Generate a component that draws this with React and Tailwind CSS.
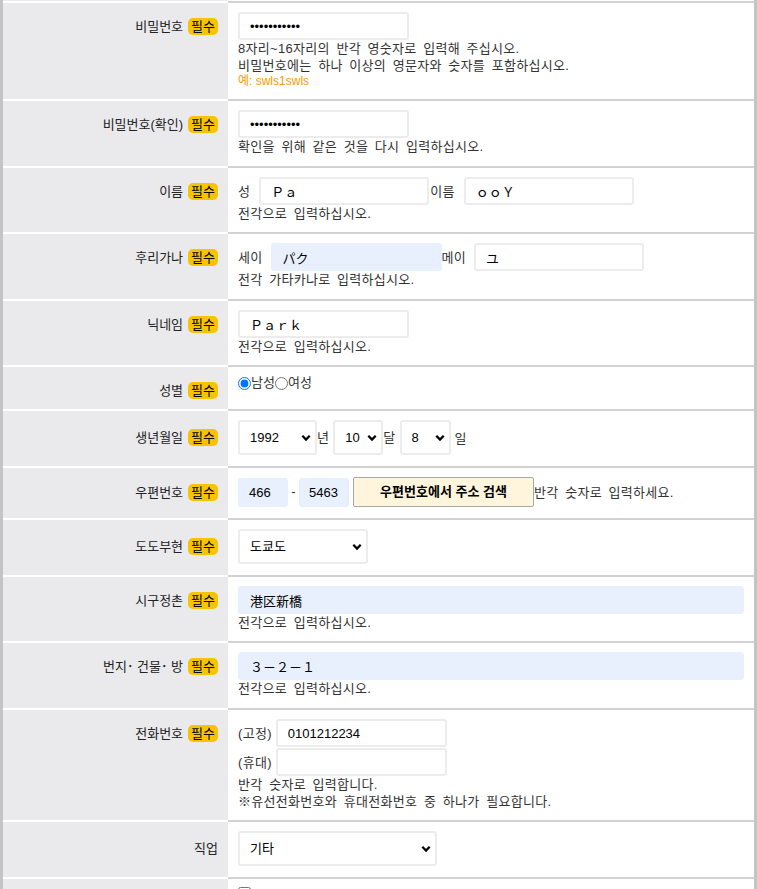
import React from "react";

const FONT = "font-['Liberation_Sans','Noto_Sans_CJK_KR',sans-serif]";

function Badge() {
  return (
    <span className="inline-flex items-center justify-center h-[17px] px-[3px] rounded-[5px] bg-[#f8c300] text-[13px] leading-none text-black">
      필수
    </span>
  );
}

function Row({ label, req = true, lh = "h-[28px]", pb = "pb-[11px]", children }) {
  return (
    <div className="flex">
      <div className="w-[225px] shrink-0 bg-[#eaeaed] border-t-2 border-white pt-[9px] pr-[10px]">
        <div className={`flex items-center justify-end gap-[5px] ${lh}`}>
          <span className="text-[13px] leading-[17px] text-[#222] whitespace-nowrap">{label}</span>
          {req && <Badge />}
        </div>
      </div>
      <div className={`flex-1 min-w-0 bg-white border-t-2 border-[#d2d2d2] pt-[9px] px-[10px] ${pb}`}>
        {children}
      </div>
    </div>
  );
}

function TextInput({ w = "w-[171px]", h = "h-[28px]", pad = "px-[10px]", value = "", type = "text", auto = false }) {
  const base = `${w} ${h} ${pad} shrink-0 border-2 rounded-[3px] text-[13px] text-black outline-none`;
  const color = auto ? "bg-[#e8f0fe] border-[#e8f0fe]" : "bg-white border-[#ececec]";
  return <input type={type} defaultValue={value} className={`${base} ${color}`} />;
}

function Select({ w, value, options }) {
  return (
    <div className={`relative shrink-0 h-[35px] ${w}`}>
      <select
        defaultValue={value}
        className="appearance-none w-full h-full border-2 border-[#ececec] rounded-[3px] bg-white pl-[10px] text-[13px] text-black outline-none"
      >
        {options.map((o) => (
          <option key={o}>{o}</option>
        ))}
      </select>
      <svg
        className="absolute right-[6px] top-1/2 -translate-y-1/2 pointer-events-none"
        width="10"
        height="7"
        viewBox="0 0 10 7"
      >
        <path d="M1.3 1.3 5 5 8.7 1.3" fill="none" stroke="black" strokeWidth="2.3" />
      </svg>
    </div>
  );
}

function Help({ children }) {
  return (
    <div className="text-[13px] leading-[17px] text-[#333] whitespace-nowrap tracking-[0.3px] [word-spacing:2.7px]">
      {children}
    </div>
  );
}

function Side({ children }) {
  return (
    <span className="text-[13px] leading-[17px] text-[#333] whitespace-nowrap tracking-[0.3px] [word-spacing:2.7px]">
      {children}
    </span>
  );
}

export default function App() {
  return (
    <div className={`min-h-screen bg-white border-x-[3px] border-[#c4c4c4] ${FONT}`}>
      <div className="flex h-px">
        <div className="w-[225px] bg-[#eaeaed]" />
        <div className="flex-1" />
      </div>

      <Row label="비밀번호">
        <TextInput type="password" value="abcdefghijk" />
        <Help>8자리~16자리의 반각 영숫자로 입력해 주십시오.</Help>
        <Help>비밀번호에는 하나 이상의 영문자와 숫자를 포함하십시오.</Help>
        <div className="text-[12px] leading-[14px] text-[#ff9900]">예: swls1swls</div>
      </Row>

      <Row label="비밀번호(확인)">
        <TextInput type="password" value="abcdefghijk" />
        <Help>확인을 위해 같은 것을 다시 입력하십시오.</Help>
      </Row>

      <Row label="이름" pb="pb-[10px]">
        <div className="flex items-center">
          <Side>성</Side>
          <div className="ml-[9px]">
            <TextInput w="w-[170px]" value="Ｐａ" />
          </div>
          <span className="ml-[1px]">
            <Side>이름</Side>
          </span>
          <div className="ml-[9px]">
            <TextInput w="w-[170px]" value="ｏｏＹ" />
          </div>
        </div>
        <Help>전각으로 입력하십시오.</Help>
      </Row>

      <Row label="후리가나">
        <div className="flex items-center">
          <Side>세이</Side>
          <div className="ml-[8px]">
            <TextInput w="w-[171px]" value="パク" auto />
          </div>
          <Side>메이</Side>
          <div className="ml-[8px]">
            <TextInput w="w-[170px]" value="ユ" />
          </div>
        </div>
        <Help>전각 가타카나로 입력하십시오.</Help>
      </Row>

      <Row label="닉네임" pb="pb-[10px]">
        <TextInput value="Ｐａｒｋ" />
        <Help>전각으로 입력하십시오.</Help>
      </Row>

      <Row label="성별">
        <div className="h-[22px]">
          <div className="flex items-center h-[14px] text-[13px] text-[#333]">
            <input type="radio" name="sex" defaultChecked className="m-0 w-[13px] h-[13px]" />
            <span>남성</span>
            <input type="radio" name="sex" className="m-0 w-[13px] h-[13px]" />
            <span>여성</span>
          </div>
        </div>
      </Row>

      <Row label="생년월일" lh="h-[35px]">
        <div className="flex items-center">
          <Select w="w-[79px]" value="1992" options={["1990", "1991", "1992", "1993"]} />
          <Side>년</Side>
          <div className="ml-[4px]">
            <Select w="w-[50px]" value="10" options={["9", "10", "11", "12"]} />
          </div>
          <Side>달</Side>
          <div className="ml-[4px]">
            <Select w="w-[51px]" value="8" options={["7", "8", "9"]} />
          </div>
          <span className="ml-[4px]">
            <Side>일</Side>
          </span>
        </div>
      </Row>

      <Row label="우편번호" lh="h-[30px]">
        <div className="flex items-center h-[30px]">
          <TextInput w="w-[50px]" h="h-[29px]" pad="pl-[9px] pr-[1px]" value="466" auto />
          <span className="w-[11px] text-center text-[13px] text-[#333]">-</span>
          <TextInput w="w-[50px]" h="h-[29px]" pad="pl-[8px] pr-[1px]" value="5463" auto />
          <button className="ml-[4px] w-[181px] h-[30px] shrink-0 bg-[#fff5dc] border border-[#a8a8a8] rounded-[2px] text-[13px] font-bold text-black">
            우편번호에서 주소 검색
          </button>
          <Side>반각 숫자로 입력하세요.</Side>
        </div>
      </Row>

      <Row label="도도부현" lh="h-[35px]">
        <Select w="w-[130px]" value="도쿄도" options={["홋카이도", "도쿄도", "오사카부"]} />
      </Row>

      <Row label="시구정촌" pb="pb-[10px]">
        <TextInput w="w-full" value="港区新橋" auto />
        <Help>전각으로 입력하십시오.</Help>
      </Row>

      <Row label="번지･ 건물･ 방">
        <TextInput w="w-full" value="３－２－１" auto />
        <Help>전각으로 입력하십시오.</Help>
      </Row>

      <Row label="전화번호" pb="pb-[10px]">
        <div className="flex items-center">
          <Side>(고정)</Side>
          <div className="ml-[4px]">
            <TextInput w="w-[171px]" value="0101212234" />
          </div>
        </div>
        <div className="flex items-center mt-[1px]">
          <Side>(휴대)</Side>
          <div className="ml-[4px]">
            <TextInput w="w-[171px]" value="" />
          </div>
        </div>
        <Help>반각 숫자로 입력합니다.</Help>
        <Help>※유선전화번호와 휴대전화번호 중 하나가 필요합니다.</Help>
      </Row>

      <Row label="직업" req={false} lh="h-[35px]">
        <Select w="w-[199px]" value="기타" options={["회사원", "학생", "기타"]} />
      </Row>

      <Row label="" req={false}>
        <div className="h-[28px] -mt-[1px]">
          <input type="checkbox" className="block m-0 w-[13px] h-[13px]" />
        </div>
      </Row>
    </div>
  );
}
